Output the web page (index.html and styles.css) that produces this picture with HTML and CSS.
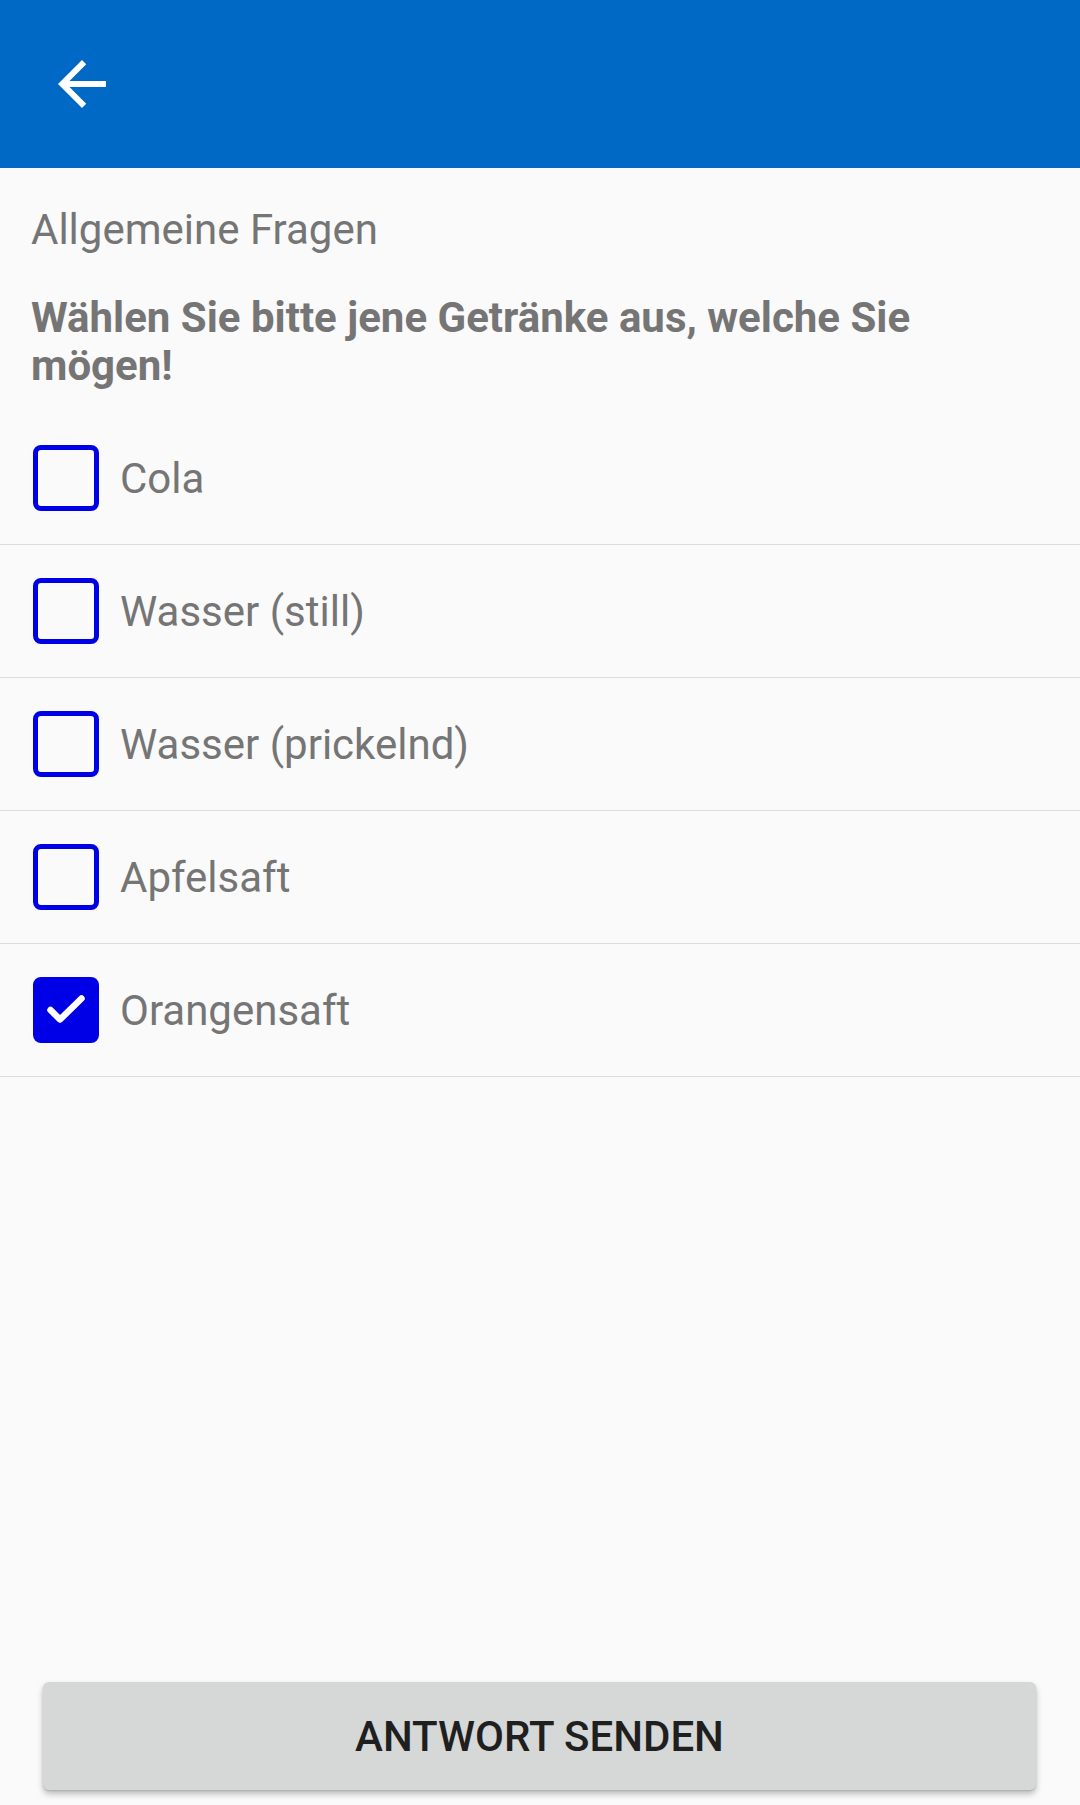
FILE: index.html
```html
<!DOCTYPE html>
<html lang="de">
<head>
<meta charset="utf-8">
<link rel="stylesheet" href="styles.css">
</head>
<body>
<div class="screen">
  <header class="toolbar">
    <button class="nav-btn" aria-label="Zurück">
      <svg viewBox="0 0 24 24" width="72" height="72"><path fill="#fff" d="M20 11H7.83l5.59-5.59L12 4l-8 8 8 8 1.41-1.41L7.83 13H20v-2z"/></svg>
    </button>
  </header>
  <main class="content">
    <div class="section-title">Allgemeine Fragen</div>
    <div class="question">Wählen Sie bitte jene Getränke aus, welche Sie mögen!</div>
    <ul class="options">
      <li class="option"><span class="box"></span><span class="label">Cola</span></li>
      <li class="option"><span class="box"></span><span class="label">Wasser (still)</span></li>
      <li class="option"><span class="box"></span><span class="label">Wasser (prickelnd)</span></li>
      <li class="option"><span class="box"></span><span class="label">Apfelsaft</span></li>
      <li class="option"><span class="box checked"><svg viewBox="0 0 56 56" width="56" height="56"><path d="M12.5 28L22 37.5 43.5 16.5" fill="none" stroke="#fff" stroke-width="6.5" stroke-linecap="round" stroke-linejoin="round"/></svg></span><span class="label">Orangensaft</span></li>
    </ul>
    <div class="spacer"></div>
    <button class="submit">ANTWORT SENDEN</button>
  </main>
</div>
</body>
</html>
```

FILE: styles.css
```css
* { box-sizing: border-box; }
html, body {
  margin: 0;
  padding: 0;
  background: #fafafa;
}
body {
  font-family: Roboto, "Noto Sans", "Liberation Sans", sans-serif;
}
.screen {
  width: 1080px;
  height: 1805px;
  display: flex;
  flex-direction: column;
}
.toolbar {
  height: 168px;
  flex: 0 0 168px;
  background: #0069c5;
  display: flex;
  align-items: center;
  padding-left: 46px;
}
.nav-btn {
  border: 0;
  background: transparent;
  padding: 0;
  width: 72px;
  height: 72px;
  display: flex;
}
.content {
  flex: 1;
  display: flex;
  flex-direction: column;
}
.section-title {
  margin: 37px 0 0 31px;
  font-size: 42px;
  line-height: 49px;
  color: #757575;
}
.question {
  margin: 40px 40px 0 31px;
  font-size: 42px;
  line-height: 48px;
  font-weight: 700;
  color: #757575;
}
.options {
  list-style: none;
  margin: 22px 0 0;
  padding: 0;
}
.option {
  height: 133px;
  border-bottom: 1px solid #dcdcdc;
  display: flex;
  align-items: center;
  padding-left: 33px;
}
.box {
  width: 66px;
  height: 66px;
  border: 5px solid #0000e6;
  border-radius: 8px;
  display: flex;
  align-items: center;
  justify-content: center;
  flex: 0 0 66px;
}
.box.checked {
  background: #0000e6;
}
.label {
  margin-left: 21px;
  font-size: 42px;
  color: #757575;
}
.spacer { flex: 1; }
.submit {
  margin: 0 44px 15px 43px;
  height: 108px;
  border: 0;
  border-radius: 6px;
  background: #d6d7d7;
  box-shadow: 0 4px 6px rgba(0,0,0,0.25), 0 1px 2px rgba(0,0,0,0.12);
  font-family: Roboto, "Noto Sans", sans-serif;
  font-weight: 500;
  font-size: 42px;
  letter-spacing: 0;
  color: #1f1f1f;
}
```
